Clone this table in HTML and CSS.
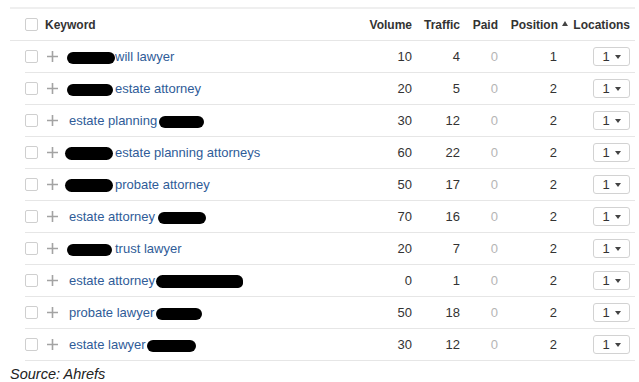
FILE: index.html
```html
<!DOCTYPE html>
<html>
<head>
<meta charset="utf-8">
<link rel="stylesheet" href="styles.css">
</head>
<body>
<div class="panel">
  <div class="head">
    <div class="grid">
      <span class="cell"><span class="cb"></span></span>
      <span class="cell kw-h">Keyword</span>
      <span class="cell num">Volume</span>
      <span class="cell num">Traffic</span>
      <span class="cell num">Paid</span>
      <span class="cell num">Position<span class="sort"></span></span>
      <span class="cell num loc-h">Locations</span>
    </div>
  </div>
  <div class="rows">
    <div class="grid row">
      <span class="cell"><span class="cb"></span></span><span class="cell plus"><svg width="11" height="11" viewBox="0 0 11 11"><path d="M5.5 0v11M0 5.5h11"/></svg></span>
      <span class="cell kw"><span class="blob w48"></span><a>will lawyer</a></span>
      <span class="cell num">10</span><span class="cell num">4</span><span class="cell num paid">0</span><span class="cell num pos">1</span>
      <span class="cell loc"><span class="dd">1<span class="caret"></span></span></span>
    </div>
    <div class="grid row">
      <span class="cell"><span class="cb"></span></span><span class="cell plus"><svg width="11" height="11" viewBox="0 0 11 11"><path d="M5.5 0v11M0 5.5h11"/></svg></span>
      <span class="cell kw"><span class="blob w46"></span><a>estate attorney</a></span>
      <span class="cell num">20</span><span class="cell num">5</span><span class="cell num paid">0</span><span class="cell num pos">2</span>
      <span class="cell loc"><span class="dd">1<span class="caret"></span></span></span>
    </div>
    <div class="grid row">
      <span class="cell"><span class="cb"></span></span><span class="cell plus"><svg width="11" height="11" viewBox="0 0 11 11"><path d="M5.5 0v11M0 5.5h11"/></svg></span>
      <span class="cell kw"><a>estate planning</a><span class="blob w45 after"></span></span>
      <span class="cell num">30</span><span class="cell num">12</span><span class="cell num paid">0</span><span class="cell num pos">2</span>
      <span class="cell loc"><span class="dd">1<span class="caret"></span></span></span>
    </div>
    <div class="grid row">
      <span class="cell"><span class="cb"></span></span><span class="cell plus"><svg width="11" height="11" viewBox="0 0 11 11"><path d="M5.5 0v11M0 5.5h11"/></svg></span>
      <span class="cell kw"><span class="blob w48 early"></span><a>estate planning attorneys</a></span>
      <span class="cell num">60</span><span class="cell num">22</span><span class="cell num paid">0</span><span class="cell num pos">2</span>
      <span class="cell loc"><span class="dd">1<span class="caret"></span></span></span>
    </div>
    <div class="grid row">
      <span class="cell"><span class="cb"></span></span><span class="cell plus"><svg width="11" height="11" viewBox="0 0 11 11"><path d="M5.5 0v11M0 5.5h11"/></svg></span>
      <span class="cell kw"><span class="blob w48 early"></span><a>probate attorney</a></span>
      <span class="cell num">50</span><span class="cell num">17</span><span class="cell num paid">0</span><span class="cell num pos">2</span>
      <span class="cell loc"><span class="dd">1<span class="caret"></span></span></span>
    </div>
    <div class="grid row">
      <span class="cell"><span class="cb"></span></span><span class="cell plus"><svg width="11" height="11" viewBox="0 0 11 11"><path d="M5.5 0v11M0 5.5h11"/></svg></span>
      <span class="cell kw"><a>estate attorney</a><span class="blob w48 gap3"></span></span>
      <span class="cell num">70</span><span class="cell num">16</span><span class="cell num paid">0</span><span class="cell num pos">2</span>
      <span class="cell loc"><span class="dd">1<span class="caret"></span></span></span>
    </div>
    <div class="grid row">
      <span class="cell"><span class="cb"></span></span><span class="cell plus"><svg width="11" height="11" viewBox="0 0 11 11"><path d="M5.5 0v11M0 5.5h11"/></svg></span>
      <span class="cell kw"><span class="blob w45"></span><a>trust lawyer</a></span>
      <span class="cell num">20</span><span class="cell num">7</span><span class="cell num paid">0</span><span class="cell num pos">2</span>
      <span class="cell loc"><span class="dd">1<span class="caret"></span></span></span>
    </div>
    <div class="grid row">
      <span class="cell"><span class="cb"></span></span><span class="cell plus"><svg width="11" height="11" viewBox="0 0 11 11"><path d="M5.5 0v11M0 5.5h11"/></svg></span>
      <span class="cell kw"><a>estate attorney</a><span class="blob w87"></span></span>
      <span class="cell num">0</span><span class="cell num">1</span><span class="cell num paid">0</span><span class="cell num pos">2</span>
      <span class="cell loc"><span class="dd">1<span class="caret"></span></span></span>
    </div>
    <div class="grid row">
      <span class="cell"><span class="cb"></span></span><span class="cell plus"><svg width="11" height="11" viewBox="0 0 11 11"><path d="M5.5 0v11M0 5.5h11"/></svg></span>
      <span class="cell kw"><a>probate lawyer</a><span class="blob w46"></span></span>
      <span class="cell num">50</span><span class="cell num">18</span><span class="cell num paid">0</span><span class="cell num pos">2</span>
      <span class="cell loc"><span class="dd">1<span class="caret"></span></span></span>
    </div>
    <div class="grid row">
      <span class="cell"><span class="cb"></span></span><span class="cell plus"><svg width="11" height="11" viewBox="0 0 11 11"><path d="M5.5 0v11M0 5.5h11"/></svg></span>
      <span class="cell kw"><a>estate lawyer</a><span class="blob w49"></span></span>
      <span class="cell num">30</span><span class="cell num">12</span><span class="cell num paid">0</span><span class="cell num pos">2</span>
      <span class="cell loc"><span class="dd">1<span class="caret"></span></span></span>
    </div>
  </div>
</div>
<p class="source">Source: Ahrefs</p>
</body>
</html>
```

FILE: styles.css
```css
* { box-sizing: border-box; }
html, body { margin: 0; padding: 0; background: #fff; }
body {
  font-family: "Liberation Sans", Arial, sans-serif;
  color: #333;
  padding: 7px 4px 0 10px;
}
.panel { width: 625px; }
.head {
  border-top: 2px solid #efefef;
  border-bottom: 1px solid #e6e6e6;
  padding-left: 15px;
}
.head .grid {
  height: 31px;
  font-weight: bold;
  font-size: 12px;
  color: #333;
  grid-template-columns: 20px 1fr 42px 48px 38px 70px 67px;
}
.rows { margin-left: 15px; }
.grid {
  display: grid;
  grid-template-columns: 22px 22px 1fr 42px 48px 38px 70px 67px;
  align-items: center;
}
.row { height: 32px; border-bottom: 1px solid #e6e6e6; font-size: 13px; }
.cell { display: flex; align-items: center; white-space: nowrap; }
.num { justify-content: flex-end; }
.pos { padding-right: 11px; }
.paid { color: #b5b5b5; }
.loc-h { padding-right: 5px; }
.cb {
  display: block;
  width: 13px; height: 13px;
  border: 1px solid #cfcfcf;
  border-radius: 2px;
  background: #fff;
}
.plus svg { display: block; margin-left: 0; }
.plus path { stroke: #a3a3a3; stroke-width: 1.6; fill: none; }
.kw a { color: #2f5c98; }
.blob {
  display: inline-block;
  height: 12px;
  background: #000;
  border-radius: 7px;
  margin-top: 2px;
}
.w45 { width: 45px; margin-left: -2px; margin-right: 3px; }
.w46 { width: 46px; margin-left: -2px; margin-right: 2px; }
.w48 { width: 48px; margin-left: -2px; margin-right: 0; }
.w49 { width: 49px; margin-left: 1px; }
.w87 { width: 87px; margin-left: 1px; height: 13px; border-radius: 8px 7px 6px 8px; }
.early { margin-left: -4px; margin-right: 2px; height: 13px; }
.after { margin-left: 2px; margin-right: 0; }
.gap3 { margin-left: 3px; margin-right: 0; }
.w46:last-child { margin-left: 2px; margin-right: 0; }
.loc { justify-content: flex-end; padding-right: 5px; }
.dd {
  display: flex;
  align-items: center;
  justify-content: center;
  gap: 5px;
  width: 37px; height: 19px;
  border: 1px solid #d2d2d2;
  border-radius: 3px;
  font-size: 13px;
  color: #333;
}
.caret {
  width: 0; height: 0;
  border-left: 3.5px solid transparent;
  border-right: 3.5px solid transparent;
  border-top: 4px solid #444;
}
.sort {
  display: inline-block;
  width: 0; height: 0;
  margin-left: 4px;
  border-left: 3.5px solid transparent;
  border-right: 3.5px solid transparent;
  border-bottom: 5px solid #444;
  margin-bottom: 2px;
}
.source {
  margin: 5px 0 0 0;
  font-style: italic;
  font-size: 14.5px;
  color: #222;
}
```
